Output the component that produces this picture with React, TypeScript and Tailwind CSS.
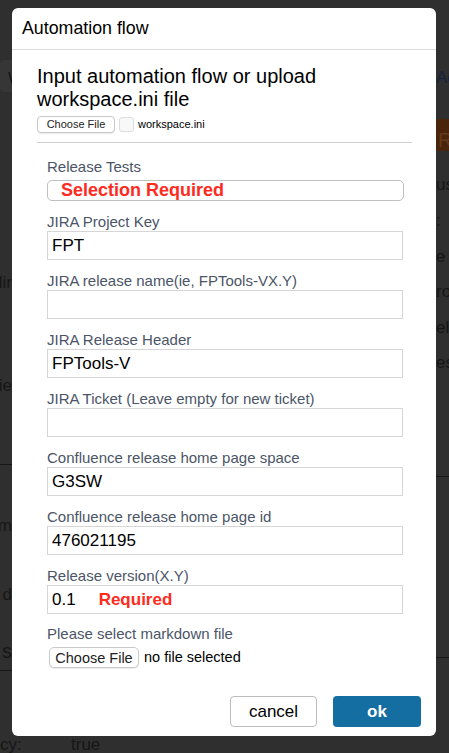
import React from "react";

const FONT = "font-['Liberation_Sans',Arial,sans-serif]";

const fields = [
  { label: "JIRA Project Key", value: "FPT" },
  { label: "JIRA release name(ie, FPTools-VX.Y)", value: "" },
  { label: "JIRA Release Header", value: "FPTools-V" },
  { label: "JIRA Ticket (Leave empty for new ticket)", value: "" },
  { label: "Confluence release home page space", value: "G3SW" },
  { label: "Confluence release home page id", value: "476021195" },
];

function Field({ label, value, required }: { label: string; value: string; required?: boolean }) {
  return (
    <div className="mt-[12px]">
      <div className="text-[15px] leading-[17px] text-[#4b5567]">{label}</div>
      <div className="mt-[1px] flex h-[29px] w-[356px] items-center border border-[#d6d6d6] pl-[4px] text-[17px] leading-[27px] text-black">
        <span>{value}</span>
        {required && <span className="ml-[23px] font-bold text-[#fe2b1e]">Required</span>}
      </div>
    </div>
  );
}

function Backdrop() {
  return (
    <div className="flex h-[753px] w-full flex-col overflow-hidden bg-[#2f2f2f] text-[17px] text-[#161616]">
      <div className="flex flex-1 justify-between">
        <div className="flex w-[12px] flex-col overflow-hidden">
          <div className="mt-[60px] h-[32px] w-[40px] rounded-[4px] bg-[#363636] pl-[8px] pt-[6px]">W</div>
          <div className="mt-[178px] flex justify-end whitespace-nowrap">lir</div>
          <div className="mt-[77px] flex justify-end whitespace-nowrap">cie</div>
          <div className="mt-[66px] border-t border-[#171717]" />
          <div className="mt-[48px] flex justify-end whitespace-nowrap">m</div>
          <div className="mt-[43px] flex justify-end whitespace-nowrap">d</div>
          <div className="mt-[29px] flex justify-end whitespace-nowrap text-[20px]">s</div>
          <div className="mt-[4px] border-t border-[#171717]" />
        </div>
        <div className="flex w-[13px] flex-col overflow-hidden">
          <div className="mt-[65px] whitespace-nowrap text-[#18233a]">Adv</div>
          <div className="mt-[28px] h-[32px] w-[40px] whitespace-nowrap bg-[#4a250b] pl-[2px] pt-[6px] text-[20px] text-[#63391b]">Re</div>
          <div className="mt-[21px] whitespace-nowrap">us</div>
          <div className="mt-[11px] whitespace-nowrap">:</div>
          <div className="mt-[10px] whitespace-nowrap">e ty</div>
          <div className="mt-[10px] whitespace-nowrap">ro</div>
          <div className="mt-[10px] whitespace-nowrap">elo</div>
          <div className="mt-[10px] whitespace-nowrap">est</div>
          <div className="mt-[100px] border-t border-[#171717]" />
          <div className="mt-[180px] border-t border-[#171717]" />
        </div>
      </div>
      <div className="flex h-[17px] items-center">
        <span className="w-[71px]">cy:</span>
        <span>true</span>
      </div>
    </div>
  );
}

export default function App() {
  return (
    <div className={`relative h-[753px] w-full overflow-hidden ${FONT}`}>
      <Backdrop />

      <div className="absolute left-[12px] top-[8px] flex h-[728px] w-[424px] flex-col rounded-[6px] bg-white">
        <div className="flex h-[42px] shrink-0 items-center border-b border-[#dcdcdc] pl-[10px] text-[17.8px] text-black">
          Automation flow
        </div>

        <div className="pl-[25px] pr-[24px] pt-[15px]">
          <h2 className="text-[20px] leading-[23px] text-black">
            Input automation flow or upload
            <br />
            workspace.ini file
          </h2>
          <div className="mt-[5px] flex items-center text-[11px] text-black">
            <button className="flex h-[17px] w-[78px] items-center justify-center rounded-[4px] border border-[#c8c8c8] bg-white text-[11px] leading-none text-[#222] shadow-[0_1px_1px_rgba(0,0,0,0.08)]">
              Choose File
            </button>
            <span className="ml-[4px] h-[15px] w-[15px] rounded-[3px] border border-[#dedede] bg-[#f8f8f8]" />
            <span className="ml-[4px]">workspace.ini</span>
          </div>
          <div className="mt-[9px] border-t border-[#cfcfcf]" />

          <div className="pl-[10px]">
            <div className="mt-[15px] text-[15px] leading-[17px] text-[#4b5567]">Release Tests</div>
            <div className="mt-[5px] flex h-[21px] w-[357px] items-center rounded-[5px] border border-[#c0c0c0] pl-[13px] text-[18px] font-bold leading-[21px] text-[#fe2b1e]">
              Selection Required
            </div>

            {fields.map((f) => (
              <Field key={f.label} label={f.label} value={f.value} />
            ))}
            <Field label="Release version(X.Y)" value="0.1" required />

            <div className="mt-[11px] text-[15px] leading-[17px] text-[#4b5567]">Please select markdown file</div>
            <div className="mt-[5px] flex items-center pl-[2px] text-[14.5px] text-black">
              <button className="flex h-[21px] w-[90px] items-center justify-center rounded-[5px] border border-[#cacaca] bg-white text-[14.5px] leading-none text-[#222] shadow-[0_1px_1px_rgba(0,0,0,0.08)]">
                Choose File
              </button>
              <span className="ml-[5px]">no file selected</span>
            </div>
          </div>
        </div>

        <div className="mt-auto flex justify-end gap-[16px] pb-[9px] pr-[15px]">
          <button className="h-[31px] w-[87px] rounded-[4px] border border-[#bcbcbc] bg-white text-[17px] text-black">
            cancel
          </button>
          <button className="h-[31px] w-[88px] rounded-[4px] bg-[#156ea2] text-[17px] font-bold text-white">
            ok
          </button>
        </div>
      </div>
    </div>
  );
}
